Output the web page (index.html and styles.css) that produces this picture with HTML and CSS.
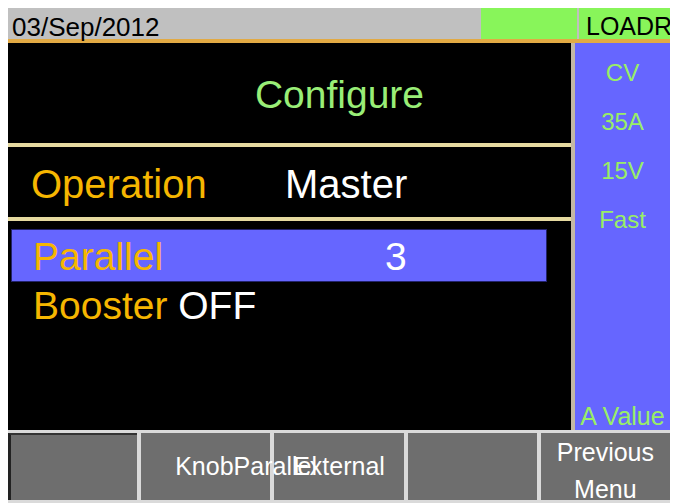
FILE: index.html
```html
<!DOCTYPE html>
<html lang="en">
<head>
    <meta charset="UTF-8">
    <meta name="viewport" content="width=device-width, initial-scale=1.0">
    <title>Configure</title>
    <link rel="stylesheet" href="styles.css">
</head>
<body>
    <div class="ecran">
        <div class="statut">
            <span class="date">03/Sep/2012</span>
            <span class="voyant"></span>
            <span class="mode">LOADR</span>
        </div>
        <div class="corps">
            <div class="principal">
                <div class="titre">Configure</div>
                <div class="ligne">
                    <span class="nom">Operation</span>
                    <span class="valeur">Master</span>
                </div>
                <div class="liste">
                    <div class="item choisi">
                        <span class="nom">Parallel</span>
                        <span class="valeur">3</span>
                    </div>
                    <div class="item simple">
                        <span class="nom">Booster</span> <span class="valeur">OFF</span>
                    </div>
                </div>
            </div>
            <div class="cote">
                <div>CV</div>
                <div>35A</div>
                <div>15V</div>
                <div>Fast</div>
                <div class="pied">A Value</div>
            </div>
        </div>
        <div class="touches">
            <div class="touche enfoncee"></div>
            <div class="touche knob"><span>KnobParallel</span></div>
            <div class="touche"><span>External</span></div>
            <div class="touche"></div>
            <div class="touche double"><span>Previous<br>Menu</span></div>
        </div>
    </div>
</body>
</html>
```

FILE: styles.css
```css
body {
    font-family: "Liberation Sans", Arial, sans-serif;
    background-color: #fff;
    margin: 0;
    padding: 8px 6px 0 8px;
}
.ecran {
    width: 662px;
}

/* barre du haut */
.statut {
    display: flex;
    height: 31px;
    background-color: #c0c0c0;
    border-bottom: 4px solid #e2aa44;
    font-size: 26px;
    line-height: 26px;
    color: #000;
}
.date {
    flex: 1;
    padding: 6px 0 0 4px;
    white-space: nowrap;
}
.voyant {
    width: 96px;
    background-color: #88f55a;
}
.mode {
    width: 84px;
    margin-left: 2px;
    padding: 5px 0 0 7px;
    background-color: #88f55a;
    font-size: 25px;
    white-space: nowrap;
    overflow: hidden;
}

.corps {
    display: flex;
    height: 387px;
}
.principal {
    width: 563px;
    background-color: #000;
    border-right: 4px solid #c4b8a4;
    font-size: 40px;
}
.titre {
    height: 100px;
    display: flex;
    align-items: center;
    justify-content: center;
    padding: 4px 0 0 100px;
    box-sizing: border-box;
    color: #99ee77;
    font-size: 39px;
}
.ligne {
    height: 78px;
    display: flex;
    align-items: center;
    padding: 4px 0 0 23px;
    box-sizing: border-box;
    border-top: 4px solid #e6daa0;
    border-bottom: 4px solid #e6daa0;
}
.ligne .nom {
    width: 254px;
}
.nom {
    color: #f6b600;
}
.valeur {
    color: #fff;
}
.liste {
    padding: 8px 24px 0 3px;
    font-size: 39px;
}
.item {
    padding-left: 22px;
}
.choisi {
    display: flex;
    align-items: center;
    height: 53px;
    padding-top: 3px;
    box-sizing: border-box;
    background-color: #6666ff;
    box-shadow: inset 0 0 0 1px #23236c;
}
.choisi .nom {
    width: 352px;
}
.simple {
    line-height: 48px;
}

/* colonne de droite */
.cote {
    flex: 1;
    display: flex;
    flex-direction: column;
    align-items: center;
    padding-top: 5px;
    background-color: #6666ff;
    color: #99ee66;
    font-size: 24px;
    line-height: 49px;
}
.cote .pied {
    margin-top: auto;
    font-size: 25px;
    line-height: 26px;
    padding-bottom: 1px;
    white-space: nowrap;
}

/* touches du bas */
.touches {
    display: grid;
    grid-template-columns: repeat(5, minmax(0, 1fr));
    gap: 4px;
    padding: 3px 0;
    background-color: #dadada;
}
.touche {
    height: 67px;
    display: flex;
    align-items: center;
    justify-content: center;
    background-color: #6e6e6e;
    color: #fff;
    font-size: 25px;
    white-space: nowrap;
    box-sizing: border-box;
}
.touche span {
    position: relative;
    z-index: 1;
}
.enfoncee {
    border-left: 3px solid #222;
    border-top: 2px solid #333;
}
.knob {
    justify-content: flex-start;
    padding-left: 34px;
}
.double {
    padding-top: 9px;
    line-height: 37px;
    text-align: center;
}
```
